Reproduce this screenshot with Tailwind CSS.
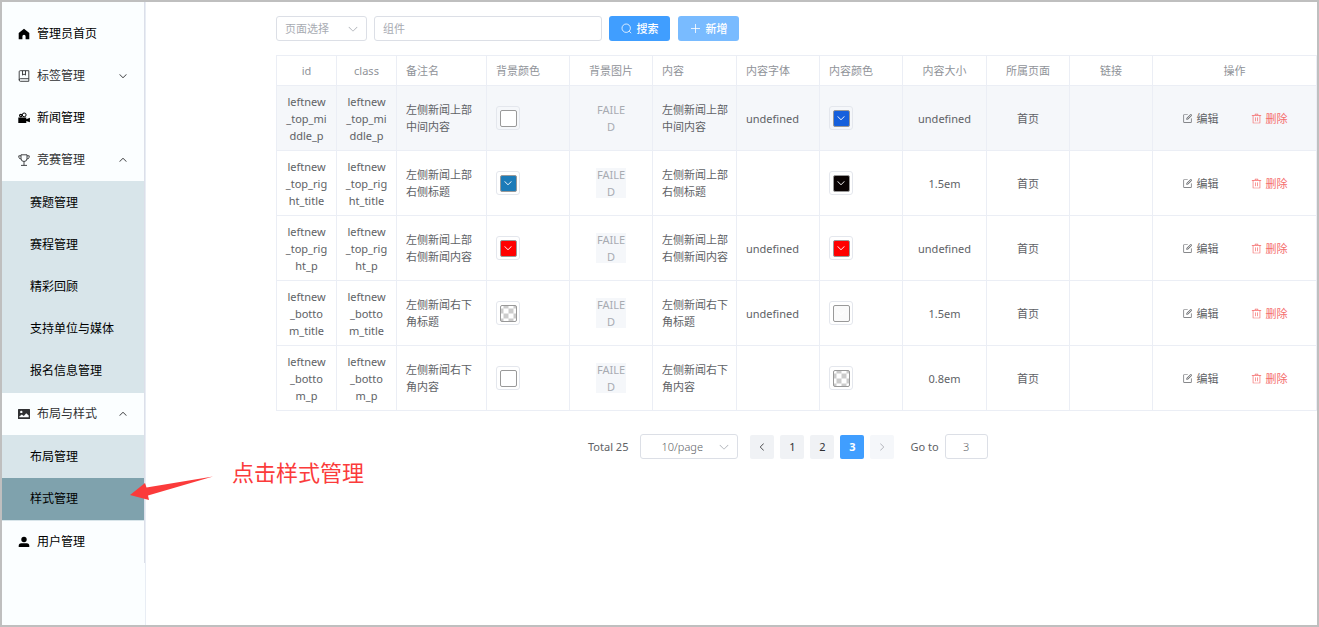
<!DOCTYPE html>
<html lang="zh-CN">
<head>
<meta charset="utf-8">
<title>样式管理</title>
<script src="https://cdn.jsdelivr.net/npm/@tailwindcss/browser@4"></script>
</head>
<body class="font-['Noto_Sans','Noto_Sans_CJK_SC',sans-serif] text-[11px] leading-[17px] text-[#606266]">
<svg class="hidden" aria-hidden="true">
  <symbol id="down" viewBox="0 0 1024 1024"><path fill="currentColor" d="M831.872 340.864 512 652.672 192.128 340.864a30.592 30.592 0 0 0-42.752 0 29.12 29.12 0 0 0 0 41.6L489.664 714.24a32 32 0 0 0 44.672 0l340.288-331.712a29.12 29.12 0 0 0 0-41.728 30.592 30.592 0 0 0-42.752 0z"/></symbol>
  <symbol id="edit" viewBox="0 0 1024 1024"><path fill="currentColor" d="M832 512a32 32 0 1 1 64 0v352a32 32 0 0 1-32 32H160a32 32 0 0 1-32-32V160a32 32 0 0 1 32-32h352a32 32 0 0 1 0 64H192v640h640V512z"/><path fill="currentColor" d="m469.952 554.24 52.8-7.552L847.104 222.4a32 32 0 1 0-45.248-45.248L477.44 501.44l-7.552 52.8zm422.4-422.4a96 96 0 0 1 0 135.808l-331.84 331.84a32 32 0 0 1-18.112 9.088L436.8 623.68a32 32 0 0 1-36.224-36.224l15.104-105.6a32 32 0 0 1 9.024-18.112l331.904-331.84a96 96 0 0 1 135.744 0z"/></symbol>
  <symbol id="trash" viewBox="0 0 1024 1024"><path fill="currentColor" d="M160 256H96a32 32 0 0 1 0-64h256V95.936a32 32 0 0 1 32-32h256a32 32 0 0 1 32 32V192h256a32 32 0 1 1 0 64h-64v672a32 32 0 0 1-32 32H192a32 32 0 0 1-32-32V256zm448-64v-64H416v64h192zM224 896h576V256H224v640zm192-128a32 32 0 0 1-32-32V416a32 32 0 0 1 64 0v320a32 32 0 0 1-32 32zm192 0a32 32 0 0 1-32-32V416a32 32 0 0 1 64 0v320a32 32 0 0 1-32 32z"/></symbol>
</svg>

<div class="relative flex min-h-screen overflow-hidden border-2 border-[#bfbfbf] bg-white">
  <aside class="w-36 shrink-0 border-r border-[#e8edf4] bg-[#fbfeff] text-xs text-[#303133]">
    <nav class="border-r border-[#dcdfe9] pt-[11px]" aria-label="主菜单">
      <a href="#" class="flex h-[42px] items-center gap-[7px] px-4 text-black">
        <svg class="size-3" viewBox="0 0 12 12"><path d="M6 .8 11.3 5v6.2H7.6V8.4a1.6 1.6 0 0 0-3.2 0v2.8H.7V5z"/></svg>管理员首页</a>
      <button type="button" class="flex h-[42px] w-full items-center gap-[7px] px-4">
        <svg class="size-3" viewBox="0 0 12 12" fill="none" stroke="currentColor" stroke-width=".9"><path d="M1.2 10V1.7q0-1 1-1h8.6v10.6H2.3q-1.1 0-1.1-1.3t1.1-1.3h8.5M4.5.8v4.3L6 4l1.5 1.1V.8"/></svg>标签管理
        <svg class="ml-auto size-[10px]"><use href="#down"/></svg></button>
      <a href="#" class="flex h-[42px] items-center gap-[7px] px-4 text-black">
        <svg class="size-3" viewBox="0 0 12 12"><path d="M.3 5.5h8v1.7l3.6-1.5v4.6L8.3 9v2H.3z"/><circle cx="2.8" cy="3.6" r="1.8"/><circle cx="6.2" cy="2.9" r="1.9" fill="none" stroke="#000"/><circle cx="2.8" cy="3.6" r=".6" fill="#fff"/></svg>新闻管理</a>
      <button type="button" class="flex h-[42px] w-full items-center gap-[7px] px-4" aria-expanded="true">
        <svg class="size-3" viewBox="0 0 12 12" fill="none" stroke="currentColor" stroke-width=".9"><path d="M3 .8h6v3.7a3 3 0 0 1-6 0zM3 1.8H.8v1.3Q1 5 3.2 5M9 1.8h2.2v1.3Q11 5 8.8 5M6 7.5v3.8M3 11.4h6"/></svg>竞赛管理
        <svg class="ml-auto size-[10px] rotate-180"><use href="#down"/></svg></button>
      <ul class="bg-[#d8e5ea] py-px text-black">
        <li><a href="#" class="flex h-[42px] items-center px-7">赛题管理</a></li>
        <li><a href="#" class="flex h-[42px] items-center px-7">赛程管理</a></li>
        <li><a href="#" class="flex h-[42px] items-center px-7">精彩回顾</a></li>
        <li><a href="#" class="flex h-[42px] items-center px-7">支持单位与媒体</a></li>
        <li><a href="#" class="flex h-[42px] items-center px-7">报名信息管理</a></li>
      </ul>
      <button type="button" class="flex h-[42px] w-full items-center gap-[7px] px-4" aria-expanded="true">
        <svg class="size-3" viewBox="0 0 12 12"><path fill="currentColor" fill-rule="evenodd" d="M.6 1h10.8q.6 0 .6.6v8.800q0 .6-.6.6H.6q-.6 0-.6-.6V1.600Q0 1 .6 1zM1.300 9.300h9.400V7.600L8.200 5.200 5.800 8 3.800 6.500 1.300 8.500zM3.300 2.700a1.200 1.200 0 1 0 0 2.400 1.200 1.200 0 0 0 0-2.400z"/></svg>布局与样式
        <svg class="ml-auto size-[10px] rotate-180"><use href="#down"/></svg></button>
      <ul class="bg-[#d8e5ea] py-px text-black">
        <li><a href="#" class="flex h-[42px] items-center px-7">布局管理</a></li>
        <li><a href="#" class="flex h-[42px] items-center bg-[#7fa2ad] px-7" aria-current="page">样式管理</a></li>
      </ul>
      <a href="#" class="flex h-[42px] items-center gap-[7px] px-4 text-black">
        <svg class="size-3" viewBox="0 0 12 12"><circle cx="6" cy="3.500" r="2.700"/><path d="M.7 11V9.800Q.7 7.200 3.200 7.200h5.600q2.500 0 2.500 2.600V11z"/></svg>用户管理</a>
    </nav>
  </aside>

  <main class="min-w-0 flex-1 pl-[130px] pt-[14px]">
    <form class="flex items-center">
      <div class="relative">
        <select aria-label="页面选择" class="block h-[25px] w-[91px] appearance-none rounded-[3px] border border-[#dcdfe6] bg-white pl-2 text-[#a8abb2]"><option>页面选择</option></select>
        <svg class="pointer-events-none absolute right-2 top-[7px] size-3 text-[#a8abb2]"><use href="#down"/></svg>
      </div>
      <input type="text" aria-label="组件" placeholder="组件" class="ml-[7px] h-[25px] w-[228px] rounded-[3px] border border-[#dcdfe6] px-2 placeholder:text-[#a8abb2]">
      <button type="button" class="ml-[7px] flex h-[25px] w-[61px] items-center justify-center gap-[5px] rounded-[3px] bg-[#409eff] font-medium text-white">
        <svg class="size-[11px]" viewBox="0 0 11 11" fill="none" stroke="currentColor" stroke-width=".8"><circle cx="5.200" cy="5.200" r="4.200"/><path d="m8.200 8.200 2 2"/></svg>搜索</button>
      <button type="button" class="ml-2 flex h-[25px] w-[61px] items-center justify-center gap-[5px] rounded-[3px] bg-[#79bbff] font-medium text-white">
        <svg class="size-[11px]" viewBox="0 0 11 11" stroke="currentColor" stroke-width=".8"><path d="M5.500 1v9M1 5.500h9"/></svg>新增</button>
    </form>

    <table class="mt-[14px] w-full table-fixed border-collapse border border-[#ebeef5] text-center">
      <colgroup><col class="w-[60px]"><col class="w-[60px]"><col class="w-[90px]"><col class="w-[83px]"><col class="w-[83px]"><col class="w-[84px]"><col class="w-[83px]"><col class="w-[83px]"><col class="w-[84px]"><col class="w-[83px]"><col class="w-[83px]"><col></colgroup>
      <thead class="text-[#909399]"><tr id="head" class="h-[30px]"></tr></thead>
      <tbody id="rows"></tbody>
    </table>

    <nav class="mt-[23px] flex items-center pl-[312px]" aria-label="分页">
      <span>Total 25</span>
      <div class="relative ml-3">
        <select aria-label="每页条数" class="block h-[25px] w-[98px] appearance-none rounded-[3px] border border-[#dcdfe6] bg-white pl-5 font-light"><option>10/page</option></select>
        <svg class="pointer-events-none absolute right-2 top-[7px] size-3 text-[#a8abb2]"><use href="#down"/></svg>
      </div>
      <div class="ml-3 flex gap-[6px] text-[#303133]">
        <button type="button" aria-label="上一页" class="flex size-[24px] items-center justify-center rounded-[2px] bg-[#f0f2f5]"><svg class="size-[10px] rotate-90"><use href="#down"/></svg></button>
        <button type="button" class="size-[24px] rounded-[2px] bg-[#f0f2f5]">1</button>
        <button type="button" class="size-[24px] rounded-[2px] bg-[#f0f2f5]">2</button>
        <button type="button" aria-current="page" class="size-[24px] rounded-[2px] bg-[#409eff] font-bold text-white">3</button>
        <button type="button" disabled aria-label="下一页" class="flex size-[24px] items-center justify-center rounded-[2px] bg-[#f5f7fa] text-[#a8abb2]"><svg class="size-[10px] -rotate-90"><use href="#down"/></svg></button>
      </div>
      <label for="goto" class="ml-4">Go to</label>
      <input id="goto" type="text" value="3" class="ml-[6px] h-[25px] w-[43px] rounded-[3px] border border-[#dcdfe6] text-center font-light">
    </nav>
  </main>

  <svg class="absolute left-[126px] top-[472px] h-[28px] w-[88px]" viewBox="0 0 88 28" fill="#fb3b3b"><path d="M2 21 17 9 18.500 13.500 85 2.500 20 21.500 21 26z"/></svg>
  <p class="absolute left-[230px] top-[454px] text-[22px] leading-8 text-[#fb3b3b]">点击样式管理</p>
</div>

<script>
const heads = ['id','class','备注名','背景颜色','背景图片','内容','内容字体','内容颜色','内容大小','所属页面','链接','操作'];
const left = [2,3,5,6,7];
const align = i => left.includes(i) ? 'pl-[9px] text-left' : 'px-1 text-center';
document.getElementById('head').innerHTML = heads.map((h, i) =>
  `<th class="border border-[#ebeef5] font-normal ${align(i)}">${h}</th>`).join('');

const data = [
  ['leftnew<br>_top_mi<br>ddle_p', '左侧新闻上部<br>中间内容', '#ffffff', 'undefined', '#1660dc', 'undefined'],
  ['leftnew<br>_top_rig<br>ht_title', '左侧新闻上部<br>右侧标题', '#1c7bb8', '', '#0a0303', '1.5em'],
  ['leftnew<br>_top_rig<br>ht_p', '左侧新闻上部<br>右侧新闻内容', '#ff0000', 'undefined', '#ff0000', 'undefined'],
  ['leftnew<br>_botto<br>m_title', '左侧新闻右下<br>角标题', '', 'undefined', '#fafafa', '1.5em'],
  ['leftnew<br>_botto<br>m_p', '左侧新闻右下<br>角内容', '#ffffff', '', '', '0.8em'],
];
const swatch = c => `<button type="button" aria-label="选择颜色" class="flex size-[24px] items-center justify-center rounded-[3px] border border-[#e4e7ed]">
  <span class="flex size-[17px] items-center justify-center rounded-[2px] border border-[#999] text-white ${c ? '' : 'bg-[conic-gradient(#ccc_25%,#fff_0_50%,#ccc_0_75%,#fff_0)] bg-[length:10px_10px] bg-center'}" style="background-color:${c || '#fff'}">${c ? '<svg class="size-[10px]"><use href="#down"/></svg>' : ''}</span></button>`;
const ops = `<div class="flex items-center justify-center gap-8">
  <button type="button" class="flex items-center gap-1"><svg class="size-[11px]"><use href="#edit"/></svg>编辑</button>
  <button type="button" class="flex items-center gap-1 text-[#f56c6c]"><svg class="size-[11px]"><use href="#trash"/></svg>删除</button></div>`;
document.getElementById('rows').innerHTML = data.map((d, r) => {
  const failed = '<div class="mx-auto flex size-[30px] items-center bg-[#f5f7fa] text-[#a8abb2]"><span class="w-full break-all">FAILED</span></div>';
  const cells = [d[0], d[0], d[1], swatch(d[2]), failed, d[1], d[3], swatch(d[4]), d[5], '首页', '', ops];
  return `<tr class="h-[65px] ${r ? '' : 'bg-[#f5f7fa]'}">` + cells.map((c, i) =>
    `<td class="border border-[#ebeef5] ${align(i)}">${c}</td>`).join('') + '</tr>';
}).join('');
</script>
</body>
</html>
